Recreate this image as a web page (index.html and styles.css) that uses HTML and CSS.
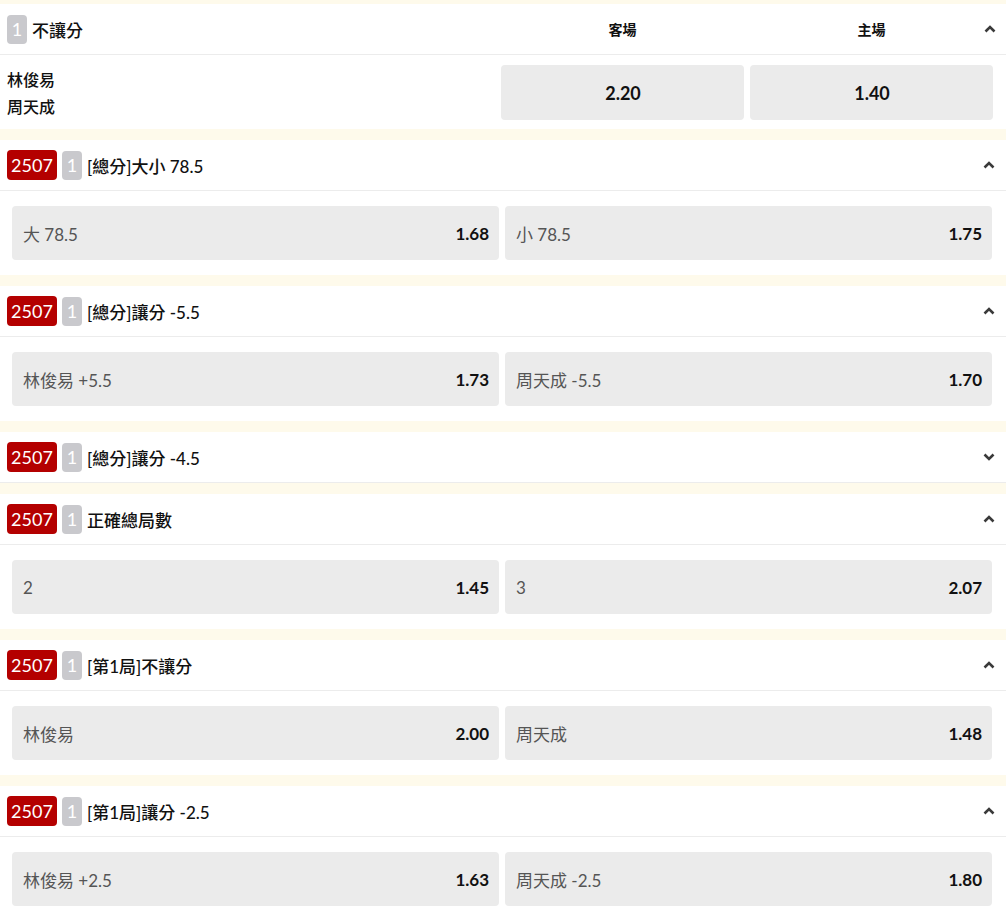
FILE: index.html
```html
<!DOCTYPE html>
<html lang="zh-Hant">
<head>
<meta charset="utf-8">
<title>Markets</title>
<link rel="stylesheet" href="styles.css">
</head>
<body>
<div class="page">

  <section class="market first">
    <div class="head grid-head">
      <div class="title"><span class="badge grey">1</span><span class="name">不讓分</span></div>
      <div class="col-label">客場</div>
      <div class="col-label">主場</div>
      <svg class="chev abs" viewBox="0 0 12 8"><polyline points="1.5,6.5 6,2 10.5,6.5"/></svg>
    </div>
    <div class="body grid-body">
      <div class="teams"><div>林俊易</div><div>周天成</div></div>
      <button class="odd center">2.20</button>
      <button class="odd center">1.40</button>
    </div>
  </section>

  <section class="market">
    <div class="head">
      <span class="badge red">2507</span><span class="badge grey">1</span><span class="name">[總分]大小 78.5</span>
      <svg class="chev" viewBox="0 0 12 8"><polyline points="1.5,6.5 6,2 10.5,6.5"/></svg>
    </div>
    <div class="body pair">
      <button class="odd"><span class="lbl">大 78.5</span><span class="val">1.68</span></button>
      <button class="odd"><span class="lbl">小 78.5</span><span class="val">1.75</span></button>
    </div>
  </section>

  <section class="market">
    <div class="head">
      <span class="badge red">2507</span><span class="badge grey">1</span><span class="name">[總分]讓分 -5.5</span>
      <svg class="chev" viewBox="0 0 12 8"><polyline points="1.5,6.5 6,2 10.5,6.5"/></svg>
    </div>
    <div class="body pair">
      <button class="odd"><span class="lbl">林俊易 +5.5</span><span class="val">1.73</span></button>
      <button class="odd"><span class="lbl">周天成 -5.5</span><span class="val">1.70</span></button>
    </div>
  </section>

  <section class="market">
    <div class="head">
      <span class="badge red">2507</span><span class="badge grey">1</span><span class="name">[總分]讓分 -4.5</span>
      <svg class="chev" viewBox="0 0 12 8"><polyline points="1.5,1.5 6,6 10.5,1.5"/></svg>
    </div>
  </section>

  <section class="market">
    <div class="head">
      <span class="badge red">2507</span><span class="badge grey">1</span><span class="name">正確總局數</span>
      <svg class="chev" viewBox="0 0 12 8"><polyline points="1.5,6.5 6,2 10.5,6.5"/></svg>
    </div>
    <div class="body pair">
      <button class="odd"><span class="lbl">2</span><span class="val">1.45</span></button>
      <button class="odd"><span class="lbl">3</span><span class="val">2.07</span></button>
    </div>
  </section>

  <section class="market">
    <div class="head">
      <span class="badge red">2507</span><span class="badge grey">1</span><span class="name">[第1局]不讓分</span>
      <svg class="chev" viewBox="0 0 12 8"><polyline points="1.5,6.5 6,2 10.5,6.5"/></svg>
    </div>
    <div class="body pair">
      <button class="odd"><span class="lbl">林俊易</span><span class="val">2.00</span></button>
      <button class="odd"><span class="lbl">周天成</span><span class="val">1.48</span></button>
    </div>
  </section>

  <section class="market">
    <div class="head">
      <span class="badge red">2507</span><span class="badge grey">1</span><span class="name">[第1局]讓分 -2.5</span>
      <svg class="chev" viewBox="0 0 12 8"><polyline points="1.5,6.5 6,2 10.5,6.5"/></svg>
    </div>
    <div class="body pair">
      <button class="odd"><span class="lbl">林俊易 +2.5</span><span class="val">1.63</span></button>
      <button class="odd"><span class="lbl">周天成 -2.5</span><span class="val">1.80</span></button>
    </div>
  </section>

</div>
</body>
</html>
```

FILE: styles.css
```css
* { box-sizing: border-box; }
html, body {
  margin: 0;
  padding: 0;
  background: #fefaeb;
  font-family: Lato, "Noto Sans CJK TC", sans-serif;
  color: #111;
}
.page {
  padding-top: 4px;
  display: flex;
  flex-direction: column;
  gap: 11px;
}
.market {
  background: #fff;
}
.head {
  position: relative;
  height: 51px;
  border-bottom: 1px solid #ececec;
  display: flex;
  align-items: center;
  padding: 0 11px 0 7px;
}
.grid-head {
  display: grid;
  grid-template-columns: 1fr 243px 243px;
  column-gap: 6px;
  padding-right: 13px;
}
.title { display: flex; align-items: center; }
.col-label {
  text-align: center;
  font-size: 14px;
  font-weight: 700;
  color: #111;
}
.badge {
  display: inline-flex;
  align-items: center;
  justify-content: center;
  height: 30px;
  border-radius: 4px;
  color: #fff;
  font-size: 18px;
  font-family: Lato, sans-serif;
  margin-right: 5px;
}
.badge.red { background: #b40000; width: 50px; }
.badge.grey { background: #c9c9cd; width: 20px; height: 29px; }
.name {
  font-size: 17px;
  font-weight: 500;
  color: #111;
}
.chev {
  width: 12px;
  height: 8px;
  margin-left: auto;
  fill: none;
  stroke: #3a3a3a;
  stroke-width: 2.6;
  stroke-linecap: butt;
  stroke-linejoin: miter;
}
.chev.abs {
  position: absolute;
  right: 10px;
  top: 21px;
}
.body { background: #fff; }
.grid-body {
  display: grid;
  grid-template-columns: 1fr 243px 243px;
  column-gap: 6px;
  align-items: center;
  padding: 10px 13px 9px 7px;
}
.teams {
  font-size: 16px;
  font-weight: 500;
  line-height: 27px;
}
.pair {
  display: grid;
  grid-template-columns: 1fr 1fr;
  column-gap: 6px;
  padding: 15px 14px 15px 12px;
}
.odd {
  height: 54px;
  border: none;
  border-radius: 4px;
  background: #ebebeb;
  font-family: Lato, "Noto Sans CJK TC", sans-serif;
  display: flex;
  align-items: center;
  justify-content: space-between;
  padding: 0 10px 0 11px;
  cursor: pointer;
}
.odd.center {
  justify-content: center;
  height: 55px;
  font-size: 18px;
  font-weight: 700;
  color: #111;
}
.lbl {
  font-size: 17px;
  color: #555;
}
.val {
  font-size: 17px;
  font-weight: 700;
  color: #111;
}
```
